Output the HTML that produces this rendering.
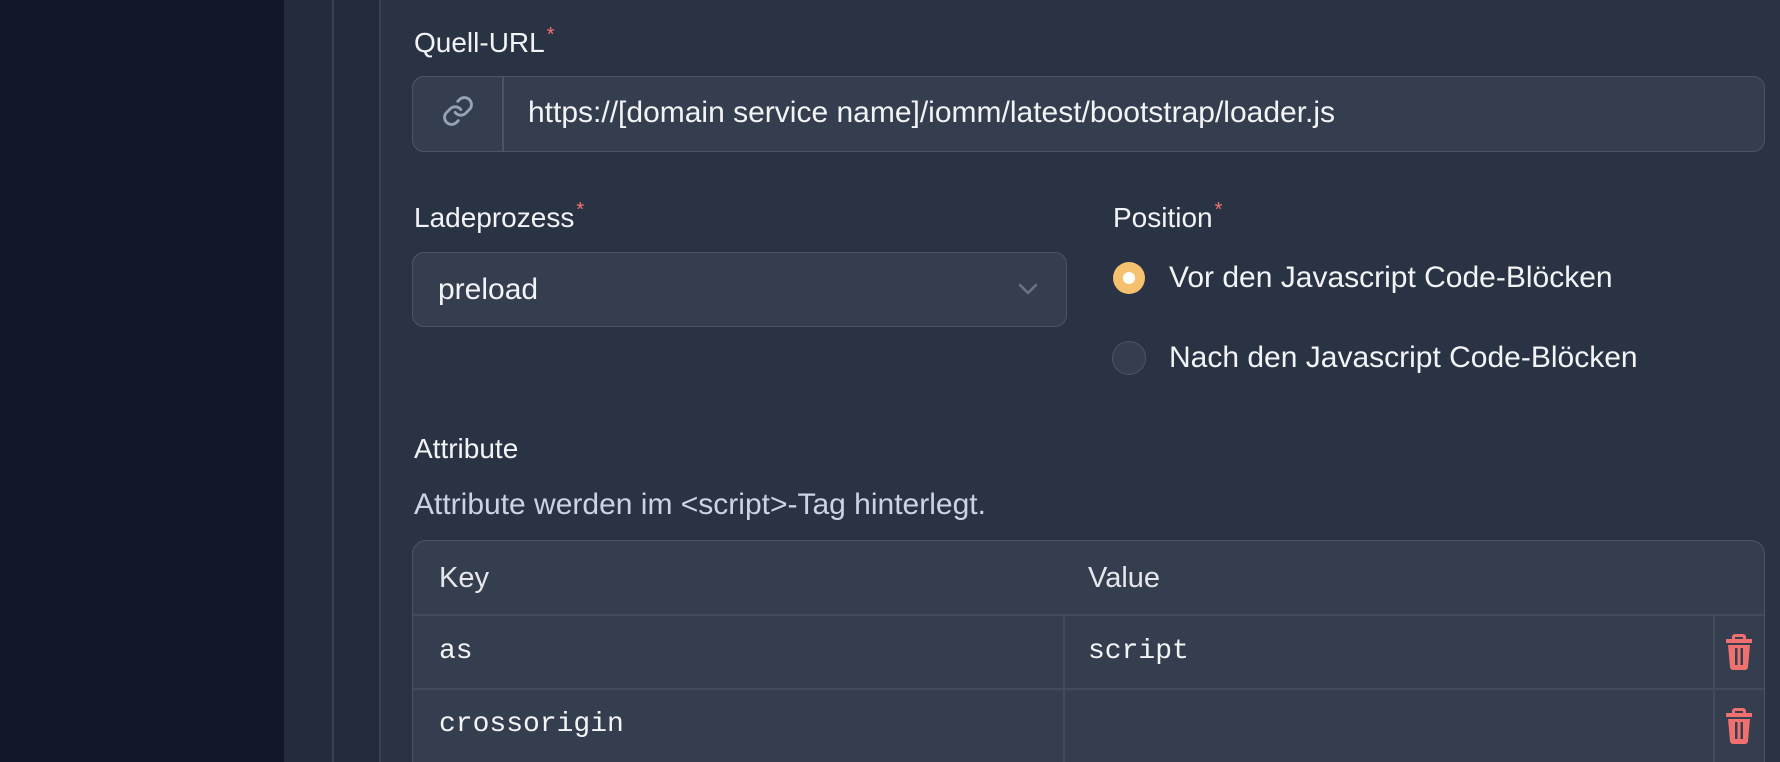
<!DOCTYPE html>
<html><head><meta charset="utf-8"><style>
*{box-sizing:border-box;margin:0;padding:0}
html{overflow:hidden;width:1780px;height:762px}
body{width:1780px;height:762px;overflow:hidden;background:#2a3344;font-family:"Liberation Sans",sans-serif;color:#f3f4f6;position:relative}
.a{position:absolute;white-space:nowrap}
.t{font-size:30px;line-height:36px}
.lbl{font-size:28px;line-height:36px;color:#f3f4f6}
.lbl sup{color:#f87171;font-size:20px;vertical-align:top;position:relative;top:-8px;margin-left:2px}
.box{background:#353e4f;border:1.5px solid #4b5563;border-radius:12px}
.mono{font-family:"Liberation Mono",monospace;font-size:28px;line-height:36px;color:#f3f4f6}
</style></head><body>
<div class="a" style="left:0;top:0;width:284px;height:762px;background:#111729"></div>
<div class="a" style="left:284px;top:0;width:96px;height:762px;background:#222a3b"></div>
<div class="a" style="left:332px;top:0;width:1.5px;height:762px;background:#374151"></div>
<div class="a" style="left:379px;top:0;width:1.5px;height:762px;background:#374151"></div>

<div class="a lbl" style="left:414px;top:25px">Quell-URL<sup>*</sup></div>
<div class="a box" style="left:412px;top:76px;width:1353px;height:76px"></div>
<div class="a" style="left:502px;top:77px;width:1.5px;height:74px;background:#4b5563"></div>
<svg class="a" style="left:441px;top:94px" width="34" height="34" viewBox="0 0 24 24" fill="none" stroke="#94a3b8" stroke-width="2" stroke-linecap="round"><path d="M10 13a5 5 0 0 0 7.5.5l3-3a5 5 0 0 0-7-7l-1.7 1.7"/><path d="M14 11a5 5 0 0 0-7.5-.5l-3 3a5 5 0 0 0 7 7l1.7-1.7"/></svg>
<div class="a t" style="left:528px;top:95px">https://[domain service name]/iomm/latest/bootstrap/loader.js</div>

<div class="a lbl" style="left:414px;top:200px">Ladeprozess<sup>*</sup></div>
<div class="a box" style="left:412px;top:252px;width:655px;height:75px"></div>
<div class="a t" style="left:438px;top:272px">preload</div>
<svg class="a" style="left:1016px;top:282px" width="24" height="14" viewBox="0 0 24 14" fill="none" stroke="#6b7280" stroke-width="2.5" stroke-linecap="round" stroke-linejoin="round"><path d="M4 3l8 8 8-8"/></svg>

<div class="a lbl" style="left:1113px;top:200px">Position<sup>*</sup></div>
<div class="a" style="left:1113px;top:262px;width:32px;height:32px;border-radius:50%;background:#f6c16f"></div>
<div class="a" style="left:1123px;top:272px;width:12px;height:12px;border-radius:50%;background:#fff"></div>
<div class="a t" style="left:1169px;top:260px">Vor den Javascript Code-Blöcken</div>
<div class="a" style="left:1112px;top:341px;width:34px;height:34px;border-radius:50%;background:#353e4f;border:1.5px solid #4b5563"></div>
<div class="a t" style="left:1169px;top:340px">Nach den Javascript Code-Blöcken</div>

<div class="a lbl" style="left:414px;top:431px">Attribute</div>
<div class="a t" style="left:414px;top:487px;color:#cbd5e1">Attribute werden im &lt;script&gt;-Tag hinterlegt.</div>

<div class="a box" style="left:412px;top:540px;width:1353px;height:240px;border-radius:14px"></div>
<div class="a" style="left:413px;top:614px;width:1351px;height:1.5px;background:#424b5c"></div>
<div class="a" style="left:413px;top:688px;width:1351px;height:1.5px;background:#424b5c"></div>
<div class="a" style="left:1063px;top:615px;width:1.5px;height:147px;background:#424b5c"></div>
<div class="a" style="left:1713px;top:615px;width:1.5px;height:147px;background:#424b5c"></div>
<div class="a" style="left:439px;top:561px;font-size:29px;line-height:34px;color:#e5e7eb">Key</div>
<div class="a" style="left:1088px;top:561px;font-size:29px;line-height:34px;color:#e5e7eb">Value</div>
<div class="a mono" style="left:439px;top:634px">as</div>
<div class="a mono" style="left:1088px;top:634px">script</div>
<div class="a mono" style="left:439px;top:707px">crossorigin</div>
<svg class="a" style="left:1725px;top:633px" width="28" height="37" viewBox="0 0 28 37"><path fill="#f07070" d="M10 1h8a3 3 0 0 1 3 3v2h6v4H1V6h6V4a3 3 0 0 1 3-3zm0 3v2h8V4zM3 12h22l-2 22a3 3 0 0 1-3 3H8a3 3 0 0 1-3-3z"/><path fill="#353e4f" d="M10 15h2.5v17H10zM15.5 15H18v17h-2.5z"/></svg>
<svg class="a" style="left:1725px;top:707px" width="28" height="37" viewBox="0 0 28 37"><path fill="#f07070" d="M10 1h8a3 3 0 0 1 3 3v2h6v4H1V6h6V4a3 3 0 0 1 3-3zm0 3v2h8V4zM3 12h22l-2 22a3 3 0 0 1-3 3H8a3 3 0 0 1-3-3z"/><path fill="#353e4f" d="M10 15h2.5v17H10zM15.5 15H18v17h-2.5z"/></svg>
</body></html>
